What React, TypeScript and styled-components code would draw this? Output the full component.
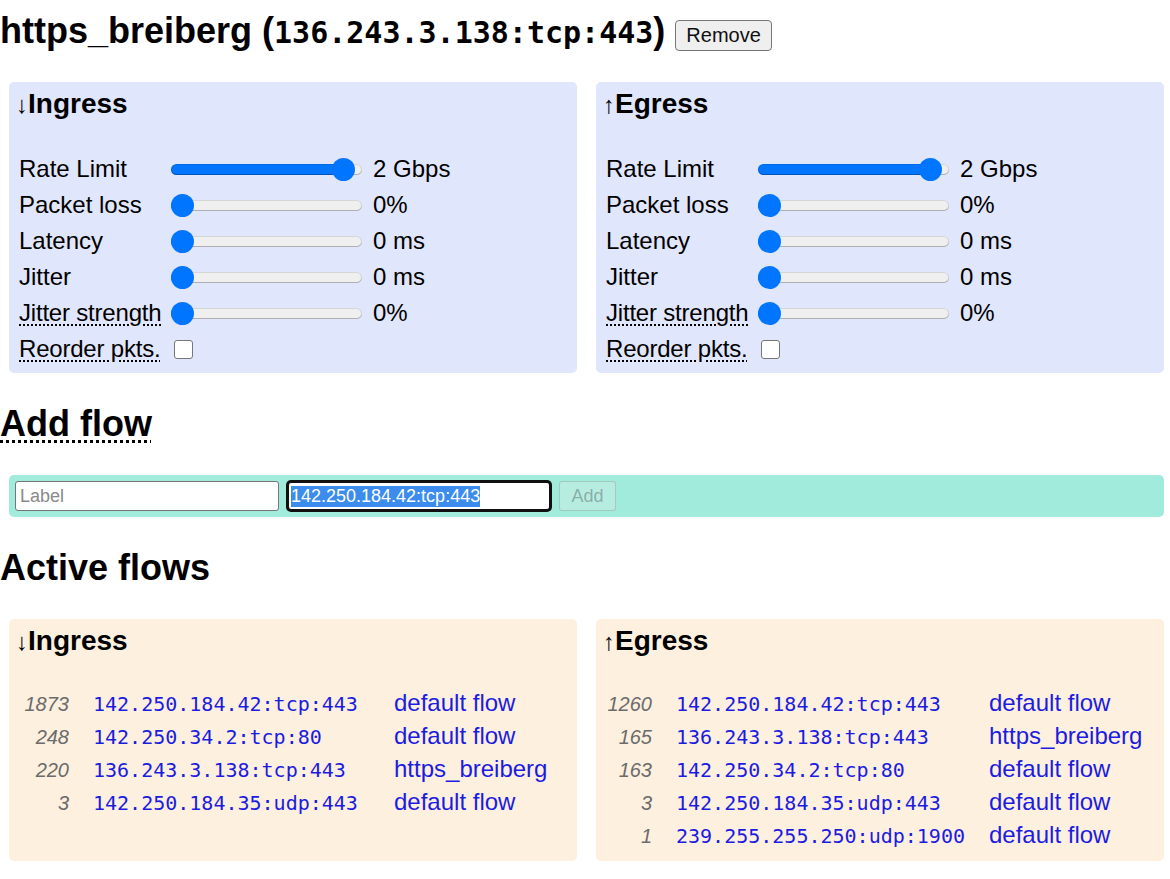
import React, { useEffect, useRef } from "react";
import styled, { createGlobalStyle } from "styled-components";

const GlobalStyle = createGlobalStyle`
  html, body { margin: 0; padding: 0; background: #ffffff; }
  body {
    font-family: "Liberation Sans", Arial, sans-serif;
    font-size: 24px;
    color: #000000;
  }
`;

const Page = styled.div`
  padding-top: 10px;
  padding-bottom: 20px;
`;

const Title = styled.h2`
  margin: 0 0 30px;
  font-size: 36px;
  font-weight: bold;
  line-height: normal;
`;

const TitleMono = styled.span`
  font-family: "DejaVu Sans Mono", "Liberation Mono", monospace;
  font-size: 30px;
`;

const RemoveButton = styled.button`
  box-sizing: border-box;
  height: 31px;
  font-family: "Liberation Sans", Arial, sans-serif;
  font-size: 20px;
  font-weight: normal;
  color: #101010;
  background: #efefef;
  border: 1px solid #767676;
  border-radius: 4px;
  padding: 0 10px;
  vertical-align: 1px;
`;

const SectionTitle = styled.h2`
  margin: 30px 0;
  font-size: 36px;
  font-weight: bold;
  line-height: normal;
`;

const Abbr = styled.abbr`
  text-decoration: underline dotted;
  text-decoration-thickness: 3px;
  text-underline-offset: 4px;
  cursor: help;
`;

const PanelRow = styled.div`
  display: grid;
  grid-template-columns: 1fr 1fr;
  column-gap: 19px;
  margin: 0 6px 0 9px;
`;

const Panel = styled.div<{ $bg: string; $pb: number }>`
  background: ${(p) => p.$bg};
  border-radius: 5px;
  padding: 6px 7px ${(p) => p.$pb}px;
`;

const PanelHeading = styled.h3<{ $gap: number }>`
  margin: 0 0 ${(p) => p.$gap}px;
  font-size: 28px;
  font-weight: bold;
  line-height: 32px;
`;

const Arrow = styled.span`
  font-family: "Liberation Sans", Arial, sans-serif;
  font-weight: normal;
  font-size: 24px;
  color: #000000;
`;

const SettingsGrid = styled.div`
  display: grid;
  grid-template-columns: 152px 191px auto;
  grid-auto-rows: 36px;
  align-items: center;
  margin-left: 3px;
`;

const SettingLabel = styled.span`
  font-size: 24px;
  white-space: nowrap;
`;

const SettingAbbr = styled.abbr`
  font-size: 24px;
  white-space: nowrap;
  letter-spacing: -0.2px;
  text-decoration: underline dotted;
  text-decoration-thickness: 2px;
  text-underline-offset: 3px;
`;

const SettingValue = styled.span`
  padding-left: 11px;
  font-size: 24px;
  white-space: nowrap;
`;

const Range = styled.input`
  -webkit-appearance: none;
  appearance: none;
  width: 191px;
  height: 11px;
  margin: 0;
  border-radius: 6px;
  box-shadow: inset 0 -1px 0 rgba(0, 0, 0, 0.18), inset 0 0 0 1px rgba(0, 0, 0, 0.1);
  outline: none;

  &::-webkit-slider-runnable-track {
    height: 11px;
    background: transparent;
  }

  &::-webkit-slider-thumb {
    -webkit-appearance: none;
    appearance: none;
    width: 23px;
    height: 23px;
    margin-top: -6px;
    border-radius: 50%;
    background: #0075ff;
    border: none;
  }
`;

const Checkbox = styled.input`
  -webkit-appearance: none;
  appearance: none;
  width: 19px;
  height: 19px;
  margin: 0 0 0 3px;
  border: 1.5px solid #767676;
  border-radius: 3px;
  background: #ffffff;
`;

const AddBar = styled.form`
  display: flex;
  align-items: center;
  gap: 8px;
  margin: 0 6px 0 9px;
  padding: 6px;
  background: #a0ebdb;
  border-radius: 5px;
`;

const TextInput = styled.input<{ $focused?: boolean }>`
  box-sizing: border-box;
  width: 264px;
  height: 30px;
  padding: 0 ${(p) => (p.$focused ? 2 : 4)}px;
  font-family: "Liberation Sans", Arial, sans-serif;
  font-size: 18px;
  color: #000;
  background: #ffffff;
  border: ${(p) => (p.$focused ? "2px solid #101010" : "1px solid #767676")};
  border-radius: ${(p) => (p.$focused ? 4 : 3)}px;
  box-shadow: ${(p) => (p.$focused ? "0 0 0 1px #101010" : "none")};
  outline: none;

  &::placeholder {
    color: #8a8a8a;
  }

  &::selection {
    background: #3b8cec;
    color: #ffffff;
  }
`;

const AddButton = styled.button`
  box-sizing: border-box;
  width: 57px;
  height: 30px;
  font-family: "Liberation Sans", Arial, sans-serif;
  font-size: 18px;
  color: rgba(16, 16, 16, 0.3);
  background: rgba(239, 239, 239, 0.3);
  border: 1px solid rgba(118, 118, 118, 0.3);
  border-radius: 3px;
  padding: 0;
`;

const FlowGrid = styled.div<{ $cols: string }>`
  display: grid;
  grid-template-columns: ${(p) => p.$cols};
  column-gap: 24px;
  grid-auto-rows: 33px;
  align-items: baseline;
`;

const FlowCount = styled.span`
  font-size: 20px;
  font-style: italic;
  color: #6b6b6b;
  text-align: right;
  line-height: 33px;
`;

const FlowAddr = styled.span`
  font-family: "DejaVu Sans Mono", "Liberation Mono", monospace;
  font-size: 20px;
  color: #1c1ce0;
  line-height: 33px;
  white-space: nowrap;
`;

const FlowName = styled.span`
  font-size: 24px;
  color: #1c1ce0;
  line-height: 33px;
  white-space: nowrap;
`;

type Setting = { label: string; abbr?: boolean; value?: number; text?: string; checkbox?: boolean };

const settings: Setting[] = [
  { label: "Rate Limit", value: 0.958, text: "2 Gbps" },
  { label: "Packet loss", value: 0, text: "0%" },
  { label: "Latency", value: 0, text: "0 ms" },
  { label: "Jitter", value: 0, text: "0 ms" },
  { label: "Jitter strength", abbr: true, value: 0, text: "0%" },
  { label: "Reorder pkts.", abbr: true, checkbox: true },
];

function Slider({ fraction }: { fraction: number }) {
  const stop = 11.5 + fraction * (191 - 23);
  return (
    <Range
      type="range"
      min={0}
      max={1000}
      value={Math.round(fraction * 1000)}
      onChange={() => {}}
      style={{
        background: `linear-gradient(to right, #0075ff 0, #0075ff ${stop}px, #efefef ${stop}px, #efefef 100%)`,
      }}
    />
  );
}

function SettingsPanel({ arrow, name }: { arrow: string; name: string }) {
  return (
    <Panel $bg="#e0e6fb" $pb={6}>
      <PanelHeading $gap={30}>
        <Arrow>{arrow}</Arrow>
        {name}
      </PanelHeading>
      <SettingsGrid>
        {settings.map((s) => (
          <React.Fragment key={s.label}>
            {s.abbr ? (
              <SettingAbbr title={s.label}>{s.label}</SettingAbbr>
            ) : (
              <SettingLabel>{s.label}</SettingLabel>
            )}
            {s.checkbox ? <Checkbox type="checkbox" /> : <Slider fraction={s.value ?? 0} />}
            <SettingValue>{s.text ?? ""}</SettingValue>
          </React.Fragment>
        ))}
      </SettingsGrid>
    </Panel>
  );
}

type Flow = { count: number; addr: string; name: string };

const ingressFlows: Flow[] = [
  { count: 1873, addr: "142.250.184.42:tcp:443", name: "default flow" },
  { count: 248, addr: "142.250.34.2:tcp:80", name: "default flow" },
  { count: 220, addr: "136.243.3.138:tcp:443", name: "https_breiberg" },
  { count: 3, addr: "142.250.184.35:udp:443", name: "default flow" },
];

const egressFlows: Flow[] = [
  { count: 1260, addr: "142.250.184.42:tcp:443", name: "default flow" },
  { count: 165, addr: "136.243.3.138:tcp:443", name: "https_breiberg" },
  { count: 163, addr: "142.250.34.2:tcp:80", name: "default flow" },
  { count: 3, addr: "142.250.184.35:udp:443", name: "default flow" },
  { count: 1, addr: "239.255.255.250:udp:1900", name: "default flow" },
];

function FlowPanel({ arrow, name, flows, cols }: { arrow: string; name: string; flows: Flow[]; cols: string }) {
  return (
    <Panel $bg="#fdf0df" $pb={10}>
      <PanelHeading $gap={28}>
        <Arrow>{arrow}</Arrow>
        {name}
      </PanelHeading>
      <FlowGrid $cols={cols}>
        {flows.map((f) => (
          <React.Fragment key={f.addr}>
            <FlowCount>{f.count}</FlowCount>
            <FlowAddr>{f.addr}</FlowAddr>
            <FlowName>{f.name}</FlowName>
          </React.Fragment>
        ))}
      </FlowGrid>
    </Panel>
  );
}

export default function App() {
  const flowRef = useRef<HTMLInputElement>(null);
  useEffect(() => {
    const el = flowRef.current;
    if (el) {
      el.focus();
      el.select();
    }
  }, []);

  return (
    <Page>
      <GlobalStyle />
      <Title>
        https_breiberg (<TitleMono>136.243.3.138:tcp:443</TitleMono>) <RemoveButton type="button">Remove</RemoveButton>
      </Title>
      <PanelRow>
        <SettingsPanel arrow="↓" name="Ingress" />
        <SettingsPanel arrow="↑" name="Egress" />
      </PanelRow>
      <SectionTitle>
        <Abbr title="Add a flow">Add flow</Abbr>
      </SectionTitle>
      <AddBar onSubmit={(e) => e.preventDefault()}>
        <TextInput placeholder="Label" />
        <TextInput ref={flowRef} $focused defaultValue="142.250.184.42:tcp:443" />
        <AddButton type="submit" disabled>
          Add
        </AddButton>
      </AddBar>
      <SectionTitle>Active flows</SectionTitle>
      <PanelRow>
        <FlowPanel arrow="↓" name="Ingress" flows={ingressFlows} cols="53px 277px auto" />
        <FlowPanel arrow="↑" name="Egress" flows={egressFlows} cols="49px 289px auto" />
      </PanelRow>
    </Page>
  );
}
